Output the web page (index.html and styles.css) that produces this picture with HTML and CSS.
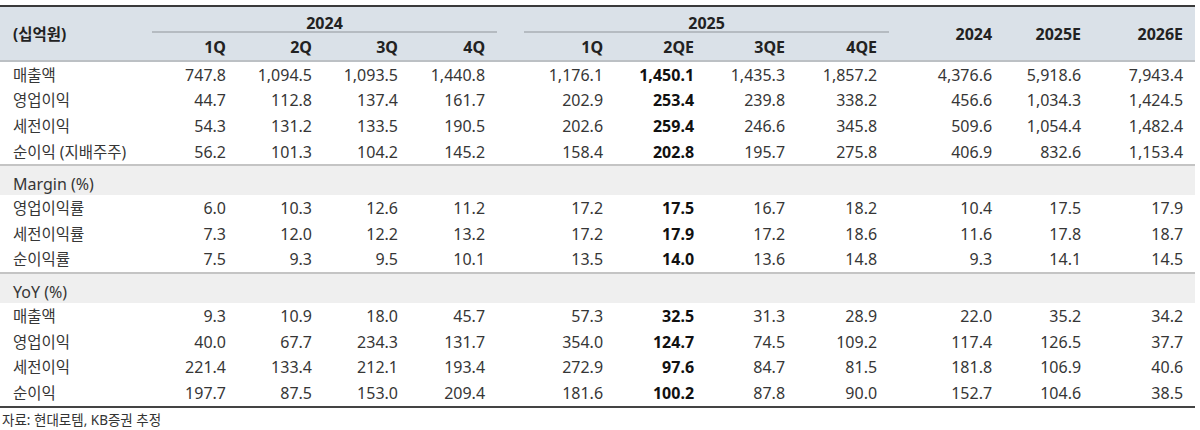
FILE: index.html
```
<!DOCTYPE html>
<html lang="ko">
<head>
<meta charset="utf-8">
<link rel="stylesheet" href="styles.css">
</head>
<body>
<table class="fin">
<colgroup>
<col class="c-label"><col class="c-q"><col class="c-q"><col class="c-q"><col class="c-q4">
<col class="c-gap">
<col class="c-q2"><col class="c-q2"><col class="c-q2"><col class="c-q24">
<col class="c-a1"><col class="c-a2"><col class="c-a3">
</colgroup>
<thead>
<tr class="h1">
<th rowspan="2" class="lab">(십억원)</th>
<th colspan="4" class="grp">2024</th>
<th class="gap"></th>
<th colspan="4" class="grp">2025</th>
<th rowspan="2" class="ann">2024</th>
<th rowspan="2" class="ann">2025E</th>
<th rowspan="2" class="ann">2026E</th>
</tr>
<tr class="h2">
<th>1Q</th><th>2Q</th><th>3Q</th><th>4Q</th>
<th class="gap"></th>
<th>1Q</th><th>2QE</th><th>3QE</th><th>4QE</th>
</tr>
</thead>
<tbody>
<tr><td class="lab">매출액</td><td>747.8</td><td>1,094.5</td><td>1,093.5</td><td>1,440.8</td><td></td><td>1,176.1</td><td class="b">1,450.1</td><td>1,435.3</td><td>1,857.2</td><td>4,376.6</td><td>5,918.6</td><td>7,943.4</td></tr>
<tr><td class="lab">영업이익</td><td>44.7</td><td>112.8</td><td>137.4</td><td>161.7</td><td></td><td>202.9</td><td class="b">253.4</td><td>239.8</td><td>338.2</td><td>456.6</td><td>1,034.3</td><td>1,424.5</td></tr>
<tr><td class="lab">세전이익</td><td>54.3</td><td>131.2</td><td>133.5</td><td>190.5</td><td></td><td>202.6</td><td class="b">259.4</td><td>246.6</td><td>345.8</td><td>509.6</td><td>1,054.4</td><td>1,482.4</td></tr>
<tr><td class="lab">순이익 (지배주주)</td><td>56.2</td><td>101.3</td><td>104.2</td><td>145.2</td><td></td><td>158.4</td><td class="b">202.8</td><td>195.7</td><td>275.8</td><td>406.9</td><td>832.6</td><td>1,153.4</td></tr>
<tr class="sec"><td colspan="13">Margin (%)</td></tr>
<tr><td class="lab">영업이익률</td><td>6.0</td><td>10.3</td><td>12.6</td><td>11.2</td><td></td><td>17.2</td><td class="b">17.5</td><td>16.7</td><td>18.2</td><td>10.4</td><td>17.5</td><td>17.9</td></tr>
<tr><td class="lab">세전이익률</td><td>7.3</td><td>12.0</td><td>12.2</td><td>13.2</td><td></td><td>17.2</td><td class="b">17.9</td><td>17.2</td><td>18.6</td><td>11.6</td><td>17.8</td><td>18.7</td></tr>
<tr><td class="lab">순이익률</td><td>7.5</td><td>9.3</td><td>9.5</td><td>10.1</td><td></td><td>13.5</td><td class="b">14.0</td><td>13.6</td><td>14.8</td><td>9.3</td><td>14.1</td><td>14.5</td></tr>
<tr class="sec"><td colspan="13">YoY (%)</td></tr>
<tr><td class="lab">매출액</td><td>9.3</td><td>10.9</td><td>18.0</td><td>45.7</td><td></td><td>57.3</td><td class="b">32.5</td><td>31.3</td><td>28.9</td><td>22.0</td><td>35.2</td><td>34.2</td></tr>
<tr><td class="lab">영업이익</td><td>40.0</td><td>67.7</td><td>234.3</td><td>131.7</td><td></td><td>354.0</td><td class="b">124.7</td><td>74.5</td><td>109.2</td><td>117.4</td><td>126.5</td><td>37.7</td></tr>
<tr><td class="lab">세전이익</td><td>221.4</td><td>133.4</td><td>212.1</td><td>193.4</td><td></td><td>272.9</td><td class="b">97.6</td><td>84.7</td><td>81.5</td><td>181.8</td><td>106.9</td><td>40.6</td></tr>
<tr class="last"><td class="lab">순이익</td><td>197.7</td><td>87.5</td><td>153.0</td><td>209.4</td><td></td><td>181.6</td><td class="b">100.2</td><td>87.8</td><td>90.0</td><td>152.7</td><td>104.6</td><td>38.5</td></tr>
</tbody>
</table>
<p class="src">자료: 현대로템, KB증권 추정</p>
</body>
</html>
```
FILE: styles.css
```
html, body {
  margin: 0;
  padding: 0;
  background: #ffffff;
}
body {
  font-family: "Noto Sans", "Noto Sans CJK KR", sans-serif;
  color: #363636;
}
.fin {
  margin-top: 5px;
  width: 1195px;
  table-layout: fixed;
  border-collapse: collapse;
  font-size: 16px;
  border-top: 2px solid #3a3a3a;
  border-bottom: 2px solid #444444;
}
.c-label { width: 152px; }
.c-q { width: 86px; }
.c-q4 { width: 87px; }
.c-gap { width: 27px; }
.c-q2 { width: 91px; }
.c-q24 { width: 92px; }
.c-a1 { width: 115px; }
.c-a2 { width: 89px; }
.c-a3 { width: 102px; }

.fin th, .fin td {
  padding: 0 12px 0 0;
  text-align: right;
  white-space: nowrap;
  line-height: 20px;
}
.fin thead th {
  background: #dae1e8;
  font-weight: bold;
  color: #222222;
}
.fin thead .h1 th {
  height: 26px;
  vertical-align: bottom;
  padding-bottom: 0;
}
.fin thead .h1 th.grp {
  text-align: center;
  padding: 0;
  box-shadow: inset 0 -2px 0 #b5bbc1;
}
.fin thead .h1 th.ann,
.fin thead .h1 th.lab {
  vertical-align: middle;
  border-bottom: 2px solid #bcc0c4;
}
.fin thead .h1 th.lab {
  text-align: left;
  padding-left: 13px;
  font-size: 15.5px;
}
.fin thead .h2 th {
  height: 27px;
  border-bottom: 2px solid #bcc0c4;
  vertical-align: middle;
}
.fin thead th.gap {
  padding: 0;
}
.fin tbody td {
  height: 25.6px;
  padding-top: 0;
  padding-bottom: 0;
}
.fin tbody td.lab {
  text-align: left;
  padding-left: 13px;
  font-size: 15.5px;
}
.fin tbody td.b {
  font-weight: bold;
  color: #111111;
}
.fin tbody tr.sec td {
  background: #efefef;
  border-top: 2px solid #c4c4c4;
  text-align: left;
  padding: 6px 0 0 13px;
  height: 23px;
  font-size: 16px;
}
.src {
  margin: 3px 0 0 2px;
  font-size: 13.5px;
  line-height: 18px;
  color: #333333;
}
```
